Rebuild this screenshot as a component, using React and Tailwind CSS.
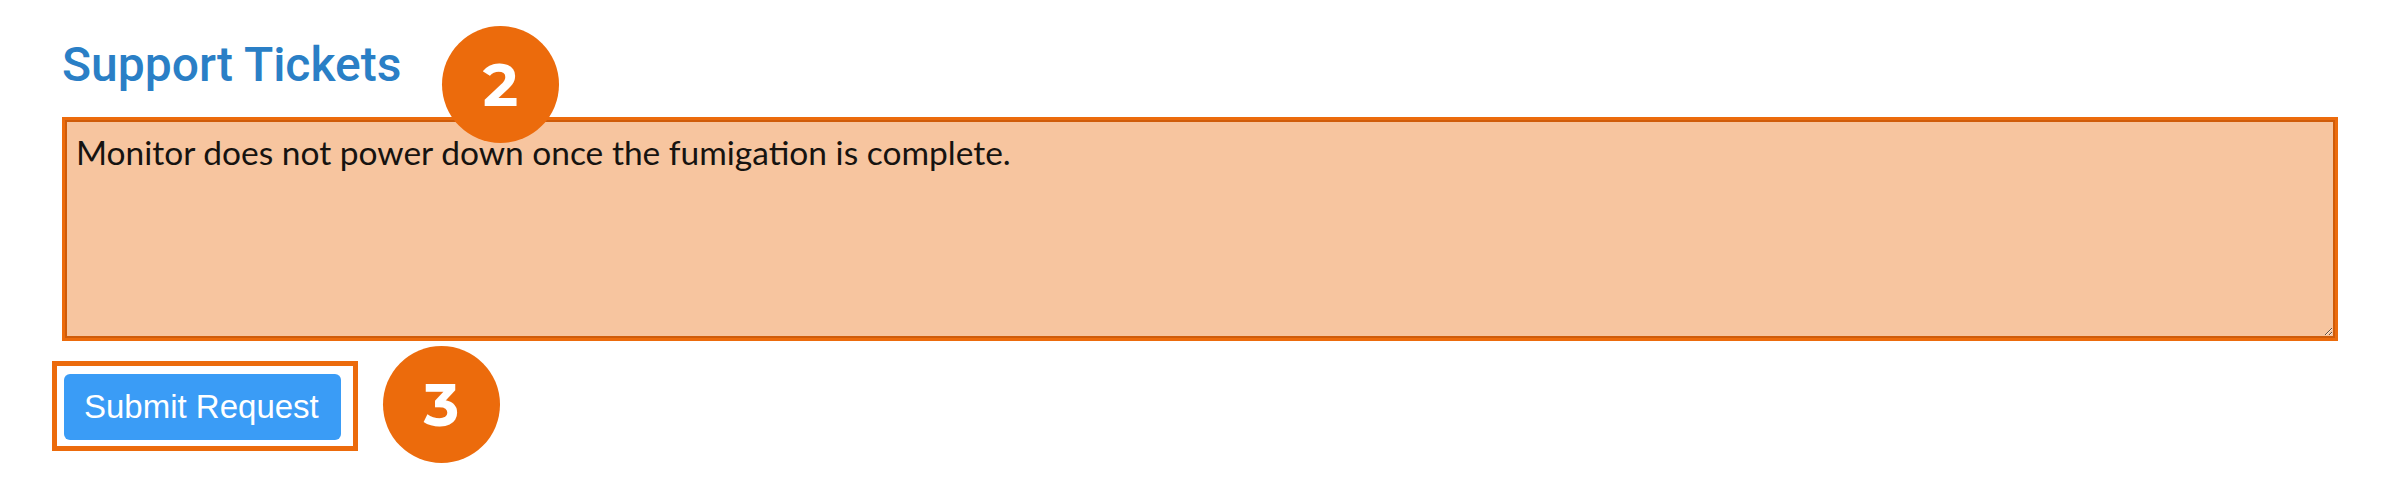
import React from "react";

const Badge = ({ n, className }) => (
  <div
    className={`absolute flex h-[117px] w-[117px] items-center justify-center rounded-full bg-[#ec6b0c] text-[60px] font-bold leading-none text-white ${className}`}
    style={{ fontFamily: "Montserrat, 'Open Sans', 'Liberation Sans', sans-serif" }}
  >
    {n}
  </div>
);

const App = () => {
  return (
    <div className="relative min-h-[500px] w-full bg-white px-[62px] pt-[37px]">
      {/* heading */}
      <h2
        className="text-[48px] font-medium leading-[55px] text-[#2a7fc6]"
        style={{ fontFamily: "Roboto, 'Liberation Sans', sans-serif" }}
      >
        Support Tickets
      </h2>

      {/* textarea with highlight */}
      <div className="mt-[25px] border-[3px] border-[#ec6b0c]">
        <textarea
          className="block h-[218px] w-full border-[2px] border-[#cf5c0a] bg-[#f7c59f] px-[9px] pt-[5px] text-[33.5px] text-[#161310] outline-none"
          style={{ fontFamily: "Lato, 'Open Sans', sans-serif" }}
          defaultValue="Monitor does not power down once the fumigation is complete."
        />
      </div>

      {/* submit button with highlight */}
      <div className="-ml-[10px] mt-[20px] inline-flex border-[5px] border-[#ec6b0c] pb-[6px] pl-[7px] pr-[12px] pt-[8px]">
        <button
          className="flex h-[66px] w-[277px] items-center rounded-[6px] bg-[#3a9cf6] pl-[20px] text-[33px] text-white"
          style={{ fontFamily: "'Liberation Sans', Arial, sans-serif" }}
        >
          Submit Request
        </button>
      </div>

      <Badge n="2" className="left-[442px] top-[26px]" />
      <Badge n="3" className="left-[383px] top-[346px]" />
    </div>
  );
};

export default App;
